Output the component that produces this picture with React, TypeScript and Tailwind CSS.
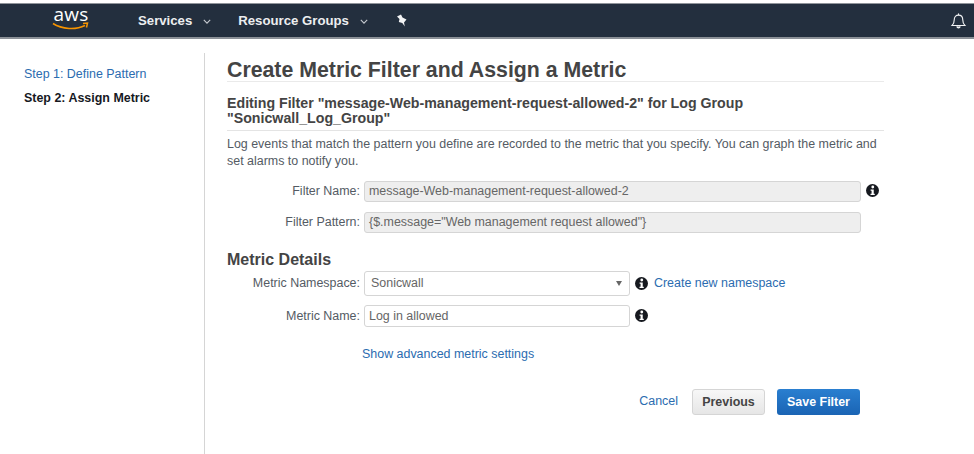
function InfoIcon() {
  return (
    <svg viewBox="0 0 24 24" className="h-[13px] w-[13px] shrink-0">
      <circle cx="12" cy="12" r="12" fill="#16191f" />
      <circle cx="12.5" cy="5.5" r="2.6" fill="#fff" />
      <path d="M8.5 10h5.8v8h1.9v2.4H8.3V18h2v-5.6H8.5z" fill="#fff" />
    </svg>
  );
}

function Chevron() {
  return (
    <svg viewBox="0 0 10 6" className="h-[5px] w-[8px]" fill="none" stroke="#c6cad0" strokeWidth="1.4">
      <path d="M1 1l4 4 4-4" />
    </svg>
  );
}

function Navbar() {
  return (
    <div className="mt-[3px] h-[36px] border-t-[1px] border-b-[2px] border-t-[#8f949a] border-b-[#8b9097] bg-[#232f3e] flex items-center text-[#eceef0] font-bold text-[13.2px]">
      <div className="ml-[52px] w-[38px] flex flex-col items-center">
        <span className="-mt-[3px] font-['Open_Sans'] font-normal text-[19px] leading-[15px] text-white tracking-[0.3px]">aws</span>
        <svg viewBox="0 0 38 9" className="h-[9px] w-[38px]" fill="none">
          <path d="M1 1.500C10 7.500 24 8 33 3.500" stroke="#f79400" strokeWidth="1.6" />
          <path d="M31 1.500l4.500-.5-1 4.500" stroke="#f79400" strokeWidth="1.5" />
        </svg>
      </div>
      <span className="ml-[48px]">Services</span>
      <span className="ml-[11px] mt-[2px]"><Chevron /></span>
      <span className="ml-[27px]">Resource Groups</span>
      <span className="ml-[11px] mt-[2px]"><Chevron /></span>
      <svg viewBox="0 0 12 13" className="ml-[28px] h-[13px] w-[12px]" fill="#f2f3f4">
        <path d="M1 2.500L5 0.500L6.500 3.500L10.500 5.500L8 8.500L8.800 12.500L6.300 9L2.800 8L3.500 5z" />
      </svg>
      <svg viewBox="0 0 24 24" className="ml-auto mr-[7px] h-[17px] w-[17px]" fill="none" stroke="#f2f3f4" strokeWidth="1.6">
        <path d="M3 19c2-2 3-3.500 3-8 0-4 2.500-6.500 6-6.500s6 2.500 6 6.500c0 4.500 1 6 3 8z" />
        <path d="M12 4.500V2" />
        <path d="M9.500 20.500c.5 1.500 1.500 2 2.500 2s2-.5 2.500-2" fill="#f2f3f4" />
      </svg>
    </div>
  );
}

function FormRow({ label, children, className }: { label: string; children: React.ReactNode; className?: string }) {
  return (
    <div className={`flex items-center ${className ?? ""}`}>
      <label className="w-[133px] text-right text-[#545b64]">{label}</label>
      <div className="ml-[4px] flex items-center">{children}</div>
    </div>
  );
}

export default function App() {
  return (
    <div className="h-[454px] w-[974px] overflow-hidden bg-white font-['Liberation_Sans',sans-serif] text-[12.45px] text-[#444]">
      <Navbar />
      <div className="flex h-[415px] pt-[14px]">
        <div className="w-[205px] border-r border-[#d5d5d5] pl-[24px] pt-[12px]">
          <div className="text-[#2b6cb0] leading-[18px]">Step 1: Define Pattern</div>
          <div className="mt-[6px] font-bold text-[#16191f] leading-[18px]">Step 2: Assign Metric</div>
        </div>
        <div className="ml-[22px] w-[657px]">
          <h1 className="h-[29px] border-b border-[#eaeaea] text-[21.3px] font-bold leading-[34px] text-[#444]">
            Create Metric Filter and Assign a Metric
          </h1>
          <h2 className="mt-[14px] border-b border-[#e4e4e4] pb-[4px] text-[14.2px] font-bold leading-[15px] text-[#444]">
            Editing Filter "message-Web-management-request-allowed-2" for Log Group<br />"Sonicwall_Log_Group"
          </h2>
          <p className="mt-[5px] leading-[17px] text-[#545b64]">
            Log events that match the pattern you define are recorded to the metric that you specify. You can graph the metric and<br />set alarms to notify you.
          </p>
          <FormRow label="Filter Name:" className="mt-[11px]">
            <div className="h-[21px] w-[497px] rounded-[3px] border border-[#d5d5d5] bg-[#eeeeee] pl-[4px] leading-[19px] text-[#666]">
              message-Web-management-request-allowed-2
            </div>
            <span className="ml-[5px] -mt-[2px]"><InfoIcon /></span>
          </FormRow>
          <FormRow label="Filter Pattern:" className="mt-[10px]">
            <div className="h-[21px] w-[497px] rounded-[3px] border border-[#d5d5d5] bg-[#eeeeee] pl-[4px] leading-[19px] text-[#666]">
              {'{$.message="Web management request allowed"}'}
            </div>
          </FormRow>
          <h3 className="mt-[17px] text-[16px] font-bold leading-[20px] text-[#444]">Metric Details</h3>
          <FormRow label="Metric Namespace:" className="mt-[1px]">
            <div className="flex h-[25px] w-[266px] items-center justify-between rounded-[3px] border border-[#d5d5d5] bg-white pl-[6px] pr-[7px] text-[#666]">
              Sonicwall
              <span className="h-0 w-0 border-x-[3px] border-t-[5px] border-x-transparent border-t-[#666]" />
            </div>
            <span className="ml-[5px]"><InfoIcon /></span>
            <a className="ml-[6px] text-[#2b6cb0]">Create new namespace</a>
          </FormRow>
          <FormRow label="Metric Name:" className="mt-[9px]">
            <div className="h-[22px] w-[266px] rounded-[3px] border border-[#d5d5d5] bg-white pl-[4px] leading-[20px] text-[#666]">
              Log in allowed
            </div>
            <span className="ml-[5px] -mt-[2px]"><InfoIcon /></span>
          </FormRow>
          <div className="ml-[135px] mt-[18px] leading-[18px] text-[#2b6cb0]">Show advanced metric settings</div>
          <div className="mt-[26px] flex items-center justify-end pr-[24px]">
            <a className="mb-[2px] text-[#2b6cb0]">Cancel</a>
            <button className="ml-[14px] h-[26px] w-[73px] rounded-[3px] border border-[#d5d5d5] bg-gradient-to-b from-[#f7f7f7] to-[#e6e6e6] font-bold text-[#444]">Previous</button>
            <button className="ml-[12px] h-[26px] w-[83px] rounded-[3px] bg-gradient-to-b from-[#2a7fd0] to-[#1a64b4] font-bold text-white">Save Filter</button>
          </div>
        </div>
      </div>
    </div>
  );
}
